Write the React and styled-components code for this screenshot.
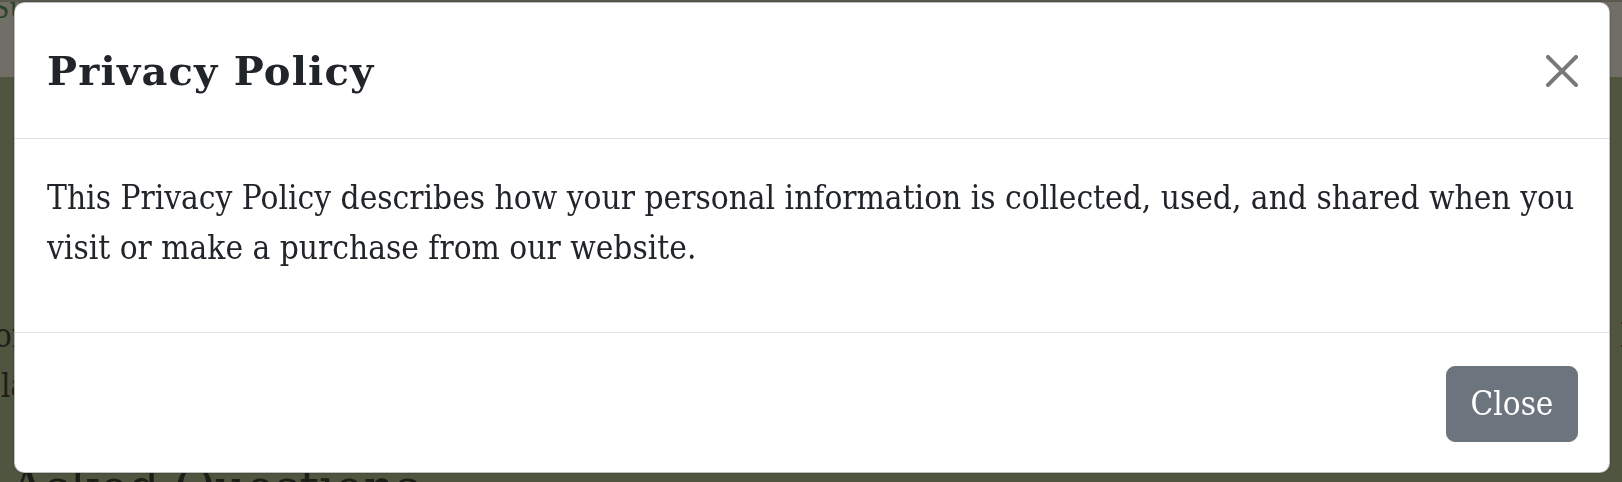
import styled, { createGlobalStyle } from 'styled-components';

const GlobalStyle = createGlobalStyle`
  html, body {
    margin: 0;
    padding: 0;
    height: 100%;
    overflow: hidden;
    background: #505540;
  }
  body {
    font-family: "DejaVu Serif Condensed", "DejaVu Serif", serif;
    font-stretch: condensed;
    color: #212529;
  }
`;

// page behind the dimmed backdrop (colours already blended with it)
const Page = styled.div`
  height: 482px;
  background: #505540;
  overflow: hidden;
`;

const TopBar = styled.div`
  height: 75px;
  border-top: 2px solid #59594f;
  background: #706e66;
  overflow: hidden;
`;

const Brand = styled.div`
  margin-left: -9px;
  margin-top: -14px;
  font-size: 30px;
  line-height: 40px;
  color: #2c452a;
  white-space: nowrap;
`;

const PageContent = styled.div`
  padding-top: 234px;
`;

const PageLine = styled.div`
  font-size: 33px;
  line-height: 50px;
  color: #1b1e17;
  white-space: nowrap;
  margin-left: ${p => p.$shift || 0}px;
`;

const PageHeading = styled.h2`
  margin: 46px 0 0 10px;
  font-size: 54px;
  line-height: 64px;
  font-weight: 500;
  color: #1b1e17;
  white-space: nowrap;
`;

const Overlay = styled.div`
  position: fixed;
  inset: 0;
  padding: 2px 12px 9px 14px;
  display: flex;
`;

const Modal = styled.div`
  flex: 1;
  display: flex;
  flex-direction: column;
  background: #fff;
  border: 1px solid rgba(0, 0, 0, 0.25);
  border-radius: 10px;
  box-shadow: 0 0 2px rgba(0, 0, 0, 0.35);
  overflow: hidden;
`;

const Header = styled.div`
  height: 135px;
  padding: 0 31px 0 32px;
  display: flex;
  align-items: center;
  justify-content: space-between;
  border-bottom: 1px solid #dee2e6;
`;

const Title = styled.h5`
  margin: 0;
  font-family: "DejaVu Serif", serif;
  font-stretch: normal;
  font-size: 40px;
  line-height: 62px;
  font-weight: 700;
  letter-spacing: 1.2px;
  color: #212529;
`;

const CloseIcon = styled.button`
  width: 32px;
  height: 32px;
  padding: 0;
  border: 0;
  background: none;
  opacity: 0.52;
  cursor: pointer;
  display: flex;
  svg {
    width: 32px;
    height: 32px;
  }
`;

const Body = styled.div`
  padding: 34px 32px 27px;
  border-bottom: 1px solid #dee2e6;

  p {
    margin: 0 0 33px;
    font-size: 33.15px;
    line-height: 49.6px;
  }
`;

const Footer = styled.div`
  flex: 1;
  display: flex;
  justify-content: flex-end;
  align-items: flex-start;
  padding: 33px 31px 0;
`;

const Button = styled.button`
  width: 132px;
  height: 76px;
  border: 1px solid #6c757d;
  border-radius: 9px;
  background: #6c757d;
  color: #fff;
  font-family: inherit;
  font-stretch: condensed;
  font-size: 33px;
  line-height: 49.6px;
  cursor: pointer;
`;

function XIcon() {
  return (
    <svg viewBox="0 0 16 16" fill="#000">
      <path d="M.293.293a1 1 0 0 1 1.414 0L8 6.586 14.293.293a1 1 0 1 1 1.414 1.414L9.414 8l6.293 6.293a1 1 0 0 1-1.414 1.414L8 9.414l-6.293 6.293a1 1 0 0 1-1.414-1.414L6.586 8 .293 1.707a1 1 0 0 1 0-1.414z" />
    </svg>
  );
}

export default function App() {
  return (
    <>
      <GlobalStyle />
      <Page>
        <TopBar>
          <Brand>Support</Brand>
        </TopBar>
        <PageContent>
          <PageLine $shift={-6}>
            on how we handle your data and the choices you have about it, please read our policy and terms in full and let me
          </PageLine>
          <PageLine $shift={1}>last updated this year.</PageLine>
          <PageHeading>Asked Questions</PageHeading>
        </PageContent>
      </Page>
      <Overlay>
        <Modal role="dialog">
          <Header>
            <Title>Privacy Policy</Title>
            <CloseIcon aria-label="Close">
              <XIcon />
            </CloseIcon>
          </Header>
          <Body>
            <p>
              This Privacy Policy describes how your personal information is collected, used, and shared when you
              visit or make a purchase from our website.
            </p>
          </Body>
          <Footer>
            <Button>Close</Button>
          </Footer>
        </Modal>
      </Overlay>
    </>
  );
}
